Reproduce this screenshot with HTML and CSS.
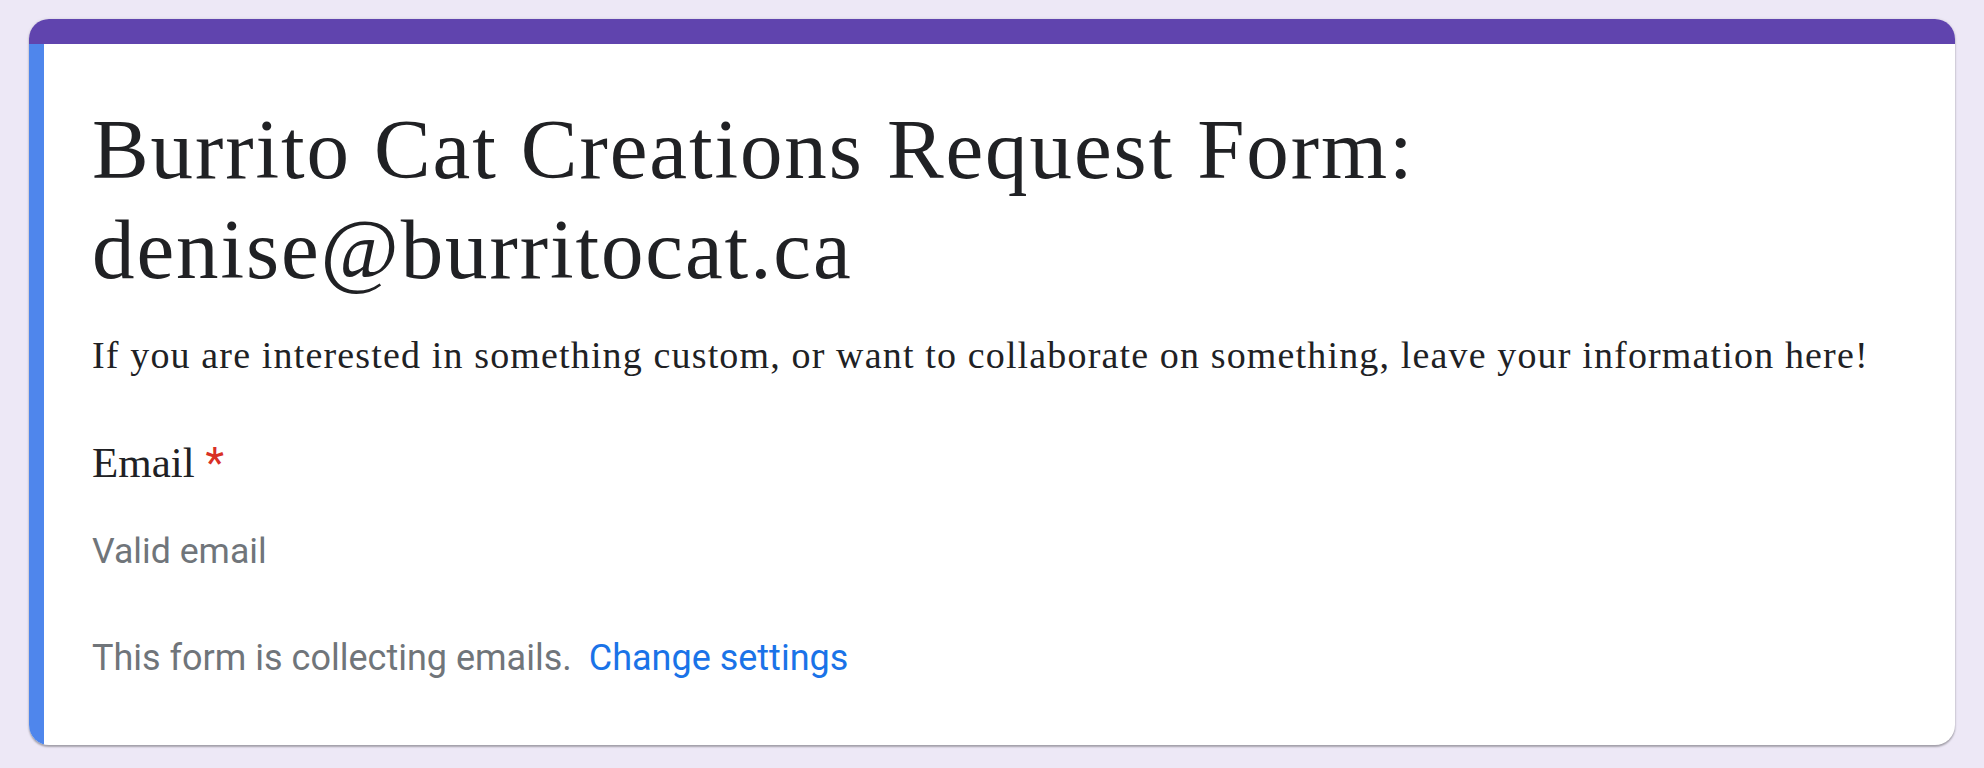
FILE: index.html
```html
<!DOCTYPE html>
<html>
<head>
    <link rel="stylesheet" href="styles.css">
</head>
<body>
    <div class="card">
        <div class="card-top"></div>
        <div class="card-body">
            <h1 class="form-title">Burrito Cat Creations Request Form: denise@burritocat.ca</h1>
            <p class="form-desc">If you are interested in something custom, or want to collaborate on something, leave your information here!</p>

            <div class="question">Email <span class="required">*</span></div>
            <div class="hint">Valid email</div>

            <div class="footer">
                This form is collecting emails.
                <a href="#" class="link">Change settings</a>
            </div>
        </div>
    </div>
</body>
</html>
```

FILE: styles.css
```css
body {
    margin: 0;
    background-color: #ede8f6;
    padding: 19px 29px 22px;
    font-family: "Liberation Serif", serif;
    color: #202124;
}
.card {
    background-color: white;
    border-radius: 20px;
    overflow: hidden;
    box-shadow: 0 2px 2px rgba(0, 0, 0, 0.28), 0 0 3px rgba(0, 0, 0, 0.12);
}
.card-top {
    height: 25px;
    background-color: #6044ae;
}
.card-body {
    border-left: 15px solid #4f86ec;
    padding: 55px 48px 63px;
}
.form-title {
    margin: 0;
    font-size: 85px;
    font-weight: normal;
    line-height: 100px;
    letter-spacing: 1.9px;
    width: 1450px;
}
.form-desc {
    margin: 31px 0 0;
    font-size: 38px;
    line-height: 50px;
    letter-spacing: 1.15px;
}
.question {
    margin-top: 52px;
    font-size: 43px;
    line-height: 60px;
}
.required {
    color: #d93025;
    font-family: Roboto, sans-serif;
}
.hint {
    margin-top: 34px;
    font-family: Roboto, sans-serif;
    font-size: 35.7px;
    line-height: 48px;
    color: #70757a;
}
.footer {
    margin-top: 59px;
    font-family: Roboto, sans-serif;
    font-size: 36px;
    line-height: 48px;
    color: #70757a;
}
.link {
    color: #1a73e8;
    text-decoration: none;
    margin-left: 8px;
}
```
